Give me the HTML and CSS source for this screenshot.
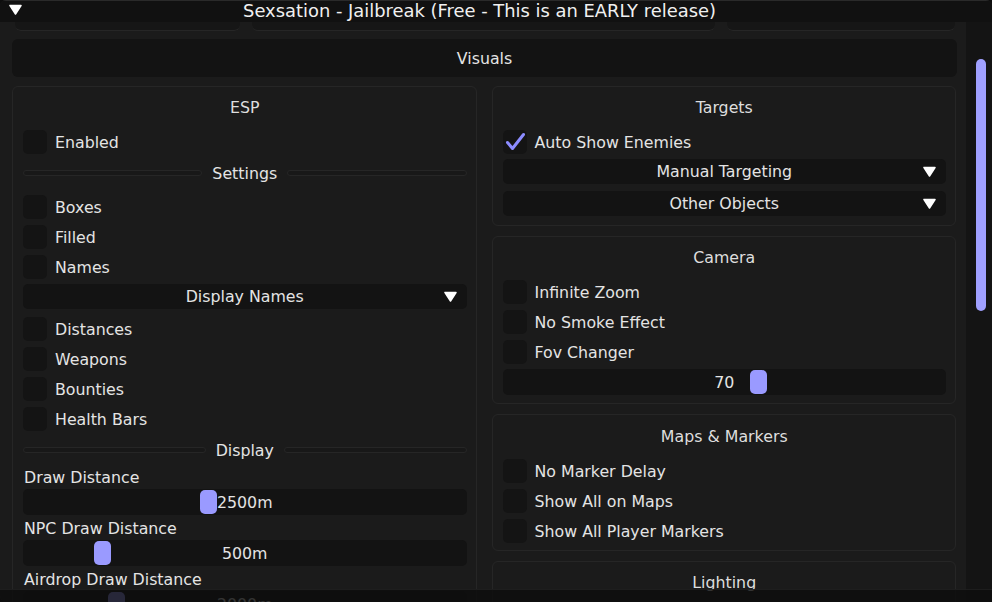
FILE: index.html
```html
<!DOCTYPE html>
<html lang="en">
<head>
    <meta charset="UTF-8">
    <meta name="viewport" content="width=device-width, initial-scale=1.0">
    <title>Sexsation - Jailbreak</title>
    <link rel="stylesheet" href="styles.css">
</head>
<body>
    <div class="window">
        <!-- Title bar -->
        <div class="titlebar">
            <svg class="collapse" width="13" height="11" viewBox="0 0 13 11"><path d="M1 1.5 H12 L6.5 10 Z" fill="#fff" stroke="#fff" stroke-width="1.5" stroke-linejoin="round"/></svg>
            <span class="title">Sexsation - Jailbreak (Free - This is an EARLY release)</span>
            <span></span>
        </div>

        <div class="body">
            <div class="content">
                <!-- tabs row, scrolled mostly out of view -->
                <div class="tabs-edge">
                    <div></div>
                    <div></div>
                    <div></div>
                </div>

                <div class="header-btn">Visuals</div>

                <div class="columns">
                    <!-- Left column -->
                    <div class="col">
                        <div class="panel">
                            <div class="panel-title">ESP</div>
                            <div class="check"><span class="box"></span>Enabled</div>
                            <div class="sep"><span class="line"></span><span>Settings</span><span class="line"></span></div>
                            <div class="check"><span class="box"></span>Boxes</div>
                            <div class="check"><span class="box"></span>Filled</div>
                            <div class="check"><span class="box"></span>Names</div>
                            <div class="combo">Display Names<svg class="arrow" width="13" height="11" viewBox="0 0 13 11"><path d="M1 1.5 H12 L6.5 10 Z" fill="#fff" stroke="#fff" stroke-width="1.5" stroke-linejoin="round"/></svg></div>
                            <div class="check"><span class="box"></span>Distances</div>
                            <div class="check"><span class="box"></span>Weapons</div>
                            <div class="check"><span class="box"></span>Bounties</div>
                            <div class="check"><span class="box"></span>Health Bars</div>
                            <div class="sep"><span class="line"></span><span>Display</span><span class="line"></span></div>
                            <div class="field-label">Draw Distance</div>
                            <div class="slider"><span class="thumb" style="left: 177px"></span>2500m</div>
                            <div class="field-label">NPC Draw Distance</div>
                            <div class="slider"><span class="thumb" style="left: 71px"></span>500m</div>
                            <div class="field-label">Airdrop Draw Distance</div>
                            <div class="slider"><span class="thumb" style="left: 85px"></span>2000m</div>
                        </div>
                    </div>

                    <!-- Right column -->
                    <div class="col">
                        <div class="panel">
                            <div class="panel-title">Targets</div>
                            <div class="check"><span class="box"><svg width="24" height="24" viewBox="0 0 24 24"><path d="M4.5 12.5 L9.5 18.5 L20.5 4.5" fill="none" stroke="#8c8cff" stroke-width="3" stroke-linecap="round" stroke-linejoin="round"/></svg></span>Auto Show Enemies</div>
                            <div class="combo">Manual Targeting<svg class="arrow" width="13" height="11" viewBox="0 0 13 11"><path d="M1 1.5 H12 L6.5 10 Z" fill="#fff" stroke="#fff" stroke-width="1.5" stroke-linejoin="round"/></svg></div>
                            <div class="combo">Other Objects<svg class="arrow" width="13" height="11" viewBox="0 0 13 11"><path d="M1 1.5 H12 L6.5 10 Z" fill="#fff" stroke="#fff" stroke-width="1.5" stroke-linejoin="round"/></svg></div>
                        </div>

                        <div class="panel camera">
                            <div class="panel-title">Camera</div>
                            <div class="check"><span class="box"></span>Infinite Zoom</div>
                            <div class="check"><span class="box"></span>No Smoke Effect</div>
                            <div class="check"><span class="box"></span>Fov Changer</div>
                            <div class="slider spaced"><span class="thumb" style="left: 247px"></span>70</div>
                        </div>

                        <div class="panel markers">
                            <div class="panel-title">Maps &amp; Markers</div>
                            <div class="check"><span class="box"></span>No Marker Delay</div>
                            <div class="check"><span class="box"></span>Show All on Maps</div>
                            <div class="check"><span class="box"></span>Show All Player Markers</div>
                        </div>

                        <div class="panel lighting">
                            <div class="panel-title">Lighting</div>
                        </div>
                    </div>
                </div>
            </div>

            <div class="scrollbar">
                <div class="scroll-thumb"></div>
            </div>

            <!-- bottom edge of the window, drawn over the scrolled content -->
            <div class="footer"></div>
        </div>
    </div>
</body>
</html>
```

FILE: styles.css
```css
body {
    margin: 0;
    padding: 0;
    background: #0e0e0e;
    font-family: 'DejaVu Sans', 'Liberation Sans', sans-serif;
    color: #e4e4e4;
}

.window {
    width: 992px;
    height: 602px;
    display: flex;
    flex-direction: column;
    background: #1b1b1b;
    border-radius: 6px;
    overflow: hidden;
}

/* ---------- title bar ---------- */

.titlebar {
    height: 22px;
    flex: none;
    display: grid;
    grid-template-columns: 1fr auto 1fr;
    align-items: center;
    padding-right: 33px;
    background: #111111;
    border-top: 1px solid #2a2a2a;
    box-sizing: border-box;
}

.collapse {
    margin-left: 9px;
    margin-top: -4px;
}

.title {
    font-size: 17.9px;
    color: #f0f0f0;
    line-height: 20px;
    margin-top: -1px;
}

/* ---------- body ---------- */

.body {
    position: relative;
    flex: 1;
    display: flex;
    min-height: 0;
}

.content {
    flex: 1;
    padding: 0 10px 0 12px;
    overflow: hidden;
}

.scrollbar {
    width: 26px;
    flex: none;
    background: #141414;
    padding-top: 37px;
    box-sizing: border-box;
}

.scroll-thumb {
    width: 10px;
    height: 252px;
    margin-left: 10px;
    background: #a0a0ff;
    border-radius: 5px;
}

.footer {
    position: absolute;
    left: 0;
    right: 0;
    bottom: 0;
    height: 12px;
    background: rgba(14, 14, 14, 0.82);
    border-top: 1px solid rgba(40, 40, 40, 0.6);
}

/* bottoms of the tab buttons scrolled above */
.tabs-edge {
    display: grid;
    grid-template-columns: 225px 1fr 228px;
    gap: 12px;
    height: 9px;
    padding: 0 1px 0 3px;
}

.tabs-edge div {
    background: #161616;
    border-bottom: 1px solid #262626;
    border-radius: 0 0 6px 6px;
}

.header-btn {
    margin-top: 8px;
    height: 38px;
    margin-right: -1px;
    background: #131313;
    border-radius: 6px;
    display: flex;
    align-items: center;
    justify-content: center;
    font-size: 15.8px;
}

.columns {
    display: grid;
    grid-template-columns: 1fr 1fr;
    column-gap: 15px;
    margin-top: 9px;
}

.col {
    display: flex;
    flex-direction: column;
    gap: 10px;
}

.panel {
    border: 1px solid #262626;
    border-radius: 6px;
    padding: 10px 9px 7px 10px;
    display: flex;
    flex-direction: column;
    font-size: 15.8px;
}

.panel.camera {
    padding-bottom: 8px;
}

.panel.markers {
    padding-top: 11px;
}

.panel.lighting {
    min-height: 80px;
}

.panel-title {
    height: 22px;
    line-height: 22px;
    text-align: center;
    margin-bottom: 5px;
    color: #dedede;
}

/* ---------- widgets ---------- */

.check {
    height: 24px;
    margin-top: 6px;
    display: flex;
    align-items: center;
    gap: 8px;
}

.box {
    width: 24px;
    height: 24px;
    background: #141414;
    border-radius: 5px;
    flex: none;
}

.box svg {
    display: block;
}

.sep {
    height: 24px;
    margin-top: 7px;
    margin-bottom: 4px;
    display: flex;
    align-items: center;
    gap: 10px;
}

.sep .line {
    flex: 1;
    height: 4px;
    background: #181818;
    border: 1px solid #262626;
    border-radius: 3px;
}

.combo {
    position: relative;
    height: 25px;
    margin-top: 5px;
    margin-bottom: 2px;
    background: #131313;
    border-radius: 5px;
    display: flex;
    align-items: center;
    justify-content: center;
}

.combo .arrow {
    position: absolute;
    right: 10px;
    top: 7px;
}

.field-label {
    height: 18px;
    line-height: 18px;
    margin-top: 3px;
    padding-left: 1px;
}

.slider {
    position: relative;
    height: 26px;
    margin-top: 2px;
    margin-bottom: 2px;
    background: #131313;
    border-radius: 5px;
    display: flex;
    align-items: center;
    justify-content: center;
}

.slider.spaced {
    margin-top: 5px;
    margin-bottom: 0;
}

.thumb {
    position: absolute;
    top: 1px;
    width: 17px;
    height: 24px;
    background: #9a9aff;
    border-radius: 5px;
}
```
